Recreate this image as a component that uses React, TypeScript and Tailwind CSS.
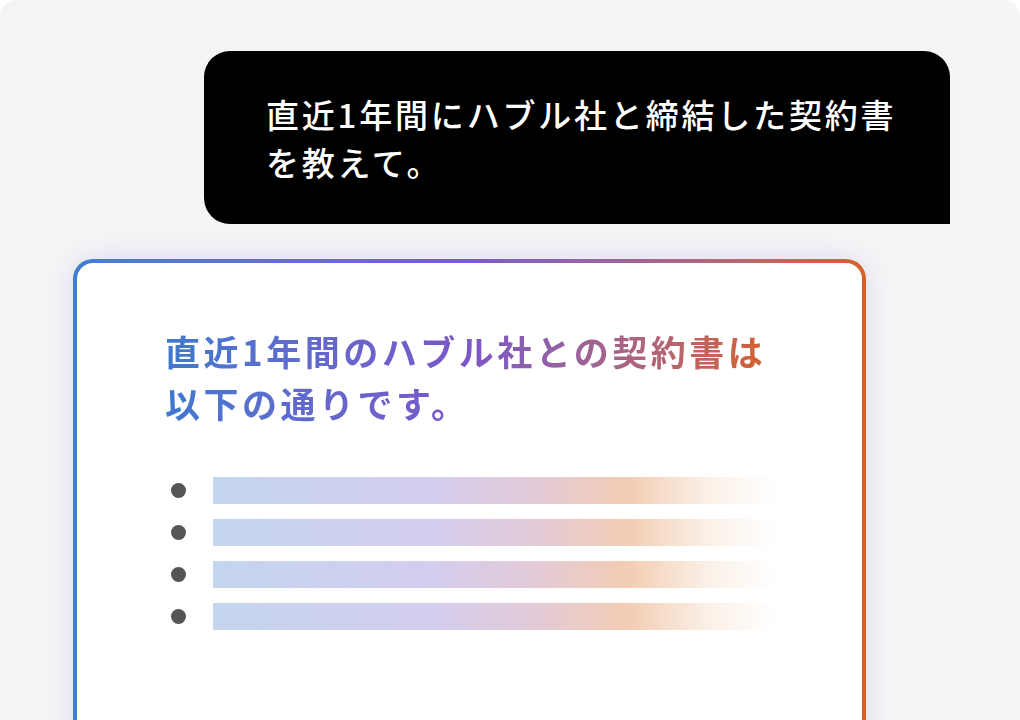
const bars = [0, 1, 2, 3]

export default function App() {
  return (
    <div className="w-[1020px] h-[720px] bg-white overflow-hidden">
      <div
        className="h-full rounded-t-2xl bg-[#f5f5f6] pt-[51px] overflow-hidden"
        style={{ fontFamily: '"Noto Sans CJK JP", "Noto Sans", sans-serif' }}
      >
        {/* user message */}
        <div className="ml-[204px] w-[746px] h-[173px] bg-black rounded-t-[26px] rounded-bl-[26px] pl-[62px] pt-[39px]">
          <p className="text-white text-[33px] leading-[48px] font-medium tracking-[0.085em]">
            直近1年間にハブル社と締結した契約書
            <br />
            を教えて。
          </p>
        </div>

        {/* answer card */}
        <div className="ml-[73px] mt-[35px] w-[793px] h-[520px] rounded-[20px] p-[4px] bg-gradient-to-r from-[#3f7fd0] via-[#7b5bcf] to-[#d65f24] shadow-[0_0_28px_rgba(120,110,220,0.2)]">
          <div className="h-full bg-white rounded-[16px] pl-[88px] pt-[62px]">
            <h2 className="inline-block text-[35px] leading-[52px] font-bold tracking-[0.1em] bg-gradient-to-r from-[#3e79cf] via-[#7a56c9] to-[#d4602a] bg-clip-text text-transparent">
              直近1年間のハブル社との契約書は
              <br />
              以下の通りです。
            </h2>

            <ul className="mt-[48px] flex flex-col gap-[15px]">
              {bars.map((i) => (
                <li key={i} className="flex items-center">
                  <span className="ml-[6px] w-[15px] h-[15px] rounded-full bg-[#555555]" />
                  <span className="ml-[27px] w-[562px] h-[27px] bg-[linear-gradient(90deg,#c4d5ee_0%,#d3cdef_38%,#e3cad6_58%,#f3cdb3_74%,rgba(248,230,215,0.6)_88%,rgba(255,255,255,0)_100%)]" />
                </li>
              ))}
            </ul>
          </div>
        </div>
      </div>
    </div>
  )
}
